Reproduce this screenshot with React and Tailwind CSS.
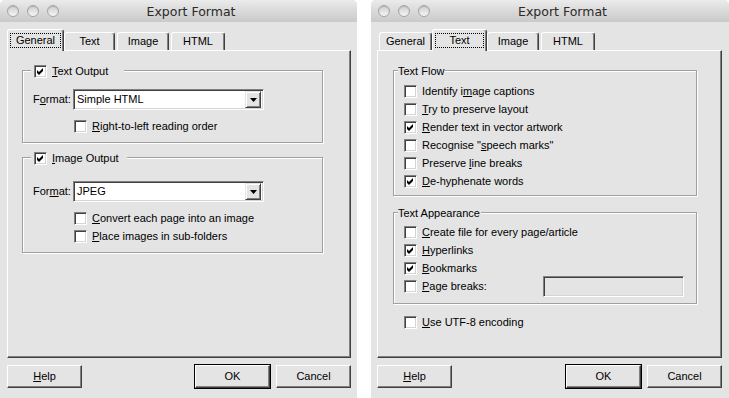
import React from 'react';

// Two "Export Format" dialogs (General / Text tabs), Windows-classic controls in Mac windows

const Mnemonic = ({ text }) => {
  const i = text.indexOf('&');
  if (i < 0) return <>{text}</>;
  return (
    <>
      {text.slice(0, i)}
      <u className="underline decoration-1 underline-offset-[1px]">{text[i + 1]}</u>
      {text.slice(i + 2)}
    </>
  );
};

const CheckBox = ({ checked }) => (
  <span className="box-border flex size-[13px] shrink-0 items-center justify-center border border-t-[#808080] border-l-[#808080] border-r-white border-b-white bg-white shadow-[inset_1px_1px_0_#404040,inset_-1px_-1px_0_#d4d4d4]">
    {checked && (
      <svg width="7" height="7" viewBox="0 0 7 7">
        <polygon points="0,2 2,4 6,0 6,3 2,7 0,5" fill="#000" />
      </svg>
    )}
  </span>
);

const CheckRow = ({ label, checked, className = '' }) => (
  <div className={`flex h-[18px] items-center gap-[5px] ${className}`}>
    <CheckBox checked={checked} />
    <span className="whitespace-nowrap"><Mnemonic text={label} /></span>
  </div>
);

const Select = ({ value }) => (
  <div className="box-border flex h-[21px] w-[191px] items-center border border-t-[#808080] border-l-[#808080] border-r-white border-b-white bg-white px-[2px] py-[1px] shadow-[inset_1px_1px_0_#404040,inset_-1px_-1px_0_#d4d4d4]">
    <span className="flex-1 pl-[1px]">{value}</span>
    <span className="box-border flex h-[17px] w-[16px] items-center justify-center border border-t-[#e4e4e4] border-l-[#e4e4e4] border-r-[#404040] border-b-[#404040] bg-[#e4e4e4] shadow-[inset_1px_1px_0_#fff,inset_-1px_-1px_0_#808080]">
      <svg width="7" height="4" viewBox="0 0 7 4">
        <polygon points="0,0 7,0 3.5,4" fill="#000" />
      </svg>
    </span>
  </div>
);

const Group = ({ legend, legendClass, className, children }) => (
  <div className={`box-border border border-[#a0a0a0] shadow-[inset_1px_1px_0_#fff,1px_1px_0_#fff] ${className}`}>
    <div className={`-mt-[7px] flex h-[14px] w-fit items-center gap-[5px] bg-[#e4e4e4] ${legendClass}`}>
      {legend}
    </div>
    {children}
  </div>
);

const Button = ({ label, isDefault }) => (
  <div
    className={`box-border flex h-[23px] w-[75px] items-center justify-center border border-t-white border-l-white border-r-[#404040] border-b-[#404040] shadow-[inset_-1px_-1px_0_#808080] ${
      isDefault ? 'outline outline-1 outline-black' : ''
    }`}
  >
    <Mnemonic text={label} />
  </div>
);

const tabs = [
  { label: 'General', w: 'w-[53px]', ws: 'w-[57px]' },
  { label: 'Text', w: 'w-[51px]', ws: 'w-[55px]' },
  { label: 'Image', w: 'w-[52px]', ws: 'w-[56px]' },
  { label: 'HTML', w: 'w-[54px]', ws: 'w-[58px]' },
];

const TabRow = ({ active }) => (
  <div className="flex h-[21px] items-end gap-[2px] pl-[2px]">
    {tabs.map((t) =>
      t.label === active ? (
        <div
          key={t.label}
          className={`${t.ws} relative z-10 -mx-[2px] -mb-px box-border flex h-[22px] items-start justify-center rounded-t-[3px] border-t border-l border-r border-t-white border-l-white border-r-[#404040] bg-[#e4e4e4] pt-[3px] shadow-[inset_-1px_0_0_#808080]`}
        >
          <span className="box-border flex h-[15px] w-[calc(100%-4px)] items-center justify-center border border-dotted border-black">
            {t.label}
          </span>
        </div>
      ) : (
        <div
          key={t.label}
          className={`${t.w} box-border flex h-[18px] items-center justify-center rounded-t-[3px] border-t border-l border-r border-t-white border-l-white border-r-[#404040] bg-[#e4e4e4] shadow-[inset_-1px_0_0_#808080]`}
        >
          {t.label}
        </div>
      )
    )}
  </div>
);

const Window = ({ active, width, pad, panelW, children }) => (
  <div className={`flex h-[398px] ${width} flex-col rounded-t-[5px] bg-[#e4e4e4]`}>
    <div className="flex h-[22px] items-center rounded-t-[5px] bg-gradient-to-b from-[#ebebeb] to-[#c9c9c9]">
      <div className="flex w-[59px] gap-[8px] pl-[7px]">
        {[0, 1, 2].map((i) => (
          <span
            key={i}
            className="box-border size-[12px] rounded-full border border-[#a4a4a4] bg-gradient-to-b from-[#cfcfcf] to-[#f6f6f6] shadow-[inset_0_1px_1px_rgba(0,0,0,0.15)]"
          />
        ))}
      </div>
      <div className="flex-1 pr-[34px] text-center font-['DejaVu_Sans',sans-serif] text-[12.5px] text-[#2a2a2a]">
        Export Format
      </div>
    </div>
    <div className={`flex flex-col pt-[7px] ${pad}`}>
      <TabRow active={active} />
      <div
        className={`box-border h-[308px] ${panelW} border border-t-white border-l-white border-r-[#404040] border-b-[#404040] shadow-[inset_-1px_-1px_0_#808080]`}
      >
        {children}
      </div>
      <div className={`mt-[7px] flex ${panelW} items-center`}>
        <Button label="&Help" />
        <div className="ml-auto flex gap-[6px]">
          <Button label="OK" isDefault />
          <Button label="Cancel" />
        </div>
      </div>
    </div>
  </div>
);

export default function App() {
  return (
    <div className="flex h-[398px] w-[729px] gap-[14px] overflow-hidden bg-white font-['Liberation_Sans',Arial,sans-serif] text-[11px] leading-[13px] text-black">
      <Window active="General" width="w-[357px]" pad="pl-[7px]" panelW="w-[344px]">
        <div className="pl-[14px] pt-[19px]">
          <Group
            className="w-[301px] pb-[9px]"
            legendClass="ml-[8px] pl-[3px] pr-[16px]"
            legend={
              <>
                <CheckBox checked />
                <span><Mnemonic text="&Text Output" /></span>
              </>
            }
          >
            <div className="mt-[11px] flex items-center pl-[10px]">
              <span className="w-[40px]"><Mnemonic text="F&ormat:" /></span>
              <Select value="Simple HTML" />
            </div>
            <CheckRow className="mt-[10px] !h-[13px] pl-[51px]" label="&Right-to-left reading order" />
          </Group>
          <Group
            className="mt-[14px] w-[301px] pb-[9px]"
            legendClass="ml-[8px] pl-[3px] pr-[8px]"
            legend={
              <>
                <CheckBox checked />
                <span><Mnemonic text="&Image Output" /></span>
              </>
            }
          >
            <div className="mt-[16px] flex items-center pl-[10px]">
              <span className="w-[40px]"><Mnemonic text="For&mat:" /></span>
              <Select value="JPEG" />
            </div>
            <CheckRow className="mt-[10px] !h-[13px] pl-[51px]" label="&Convert each page into an image" />
            <CheckRow className="mt-[5px] !h-[13px] pl-[51px]" label="&Place images in sub-folders" />
          </Group>
        </div>
      </Window>

      <Window active="Text" width="w-[358px]" pad="pl-[6px]" panelW="w-[345px]">
        <div className="pl-[15px] pt-[19px]">
          <Group className="w-[304px] pb-[5px]" legendClass="ml-[4px] pr-[1px]" legend={<span>Text Flow</span>}>
            <div className="mt-[4px] flex flex-col pl-[10px]">
              <CheckRow label="Identify i&mage captions" />
              <CheckRow label="&Try to preserve layout" />
              <CheckRow label="&Render text in vector artwork" checked />
              <CheckRow label={'Recognise "&speech marks"'} />
              <CheckRow label="Preserve &line breaks" />
              <CheckRow label="&De-hyphenate words" checked />
            </div>
          </Group>
          <Group className="mt-[16px] w-[304px] pb-[8px]" legendClass="ml-[4px] pr-[1px]" legend={<span>Text Appearance</span>}>
            <div className="mt-[3px] flex flex-col pl-[10px]">
              <CheckRow label="&Create file for every page/article" />
              <CheckRow label="&Hyperlinks" checked />
              <CheckRow label="&Bookmarks" checked />
              <div className="flex h-[18px] items-center gap-[5px]">
                <CheckBox />
                <span className="w-[116px]"><Mnemonic text="&Page breaks:" /></span>
                <span className="box-border h-[21px] w-[141px] shrink-0 border border-t-[#808080] border-l-[#808080] border-r-white border-b-white bg-[#e4e4e4] shadow-[inset_1px_1px_0_#404040,inset_-1px_-1px_0_#d4d4d4]" />
              </div>
            </div>
          </Group>
          <CheckRow className="ml-[11px] mt-[9px]" label="&Use UTF-8 encoding" />
        </div>
      </Window>
    </div>
  );
}
